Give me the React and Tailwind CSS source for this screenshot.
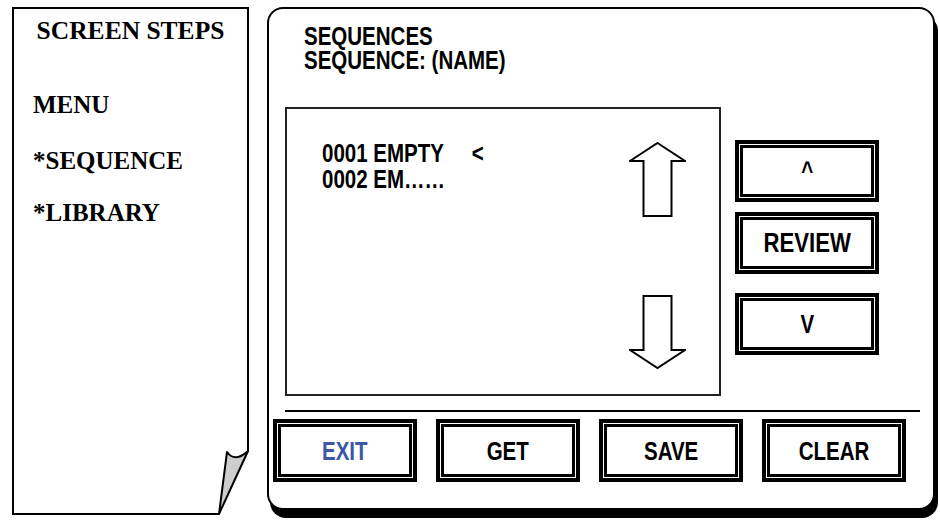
import React from "react";

const SANS = { fontFamily: '"Liberation Sans", Arial, sans-serif' };
const SERIF = { fontFamily: '"Liberation Serif", "Times New Roman", serif' };

const DoubleButton = ({ label, className = "", textClass = "text-black text-[25px]" }) => (
  <div className={`border-4 border-black bg-white p-px ${className}`}>
    <div className="w-full h-full border-[3px] border-black flex items-center justify-center">
      <span
        className={`inline-block scale-x-[0.82] origin-center font-bold leading-[24px] ${textClass}`}
        style={SANS}
      >
        {label}
      </span>
    </div>
  </div>
);

const UpArrow = () => (
  <svg width="57" height="75" viewBox="0 0 57 75">
    <path
      d="M28.5 1 L56 19 L42.5 19 L42.5 74 L14.5 74 L14.5 19 L1 19 Z"
      fill="#fff"
      stroke="#000"
      strokeWidth="2"
    />
  </svg>
);

const DownArrow = () => (
  <svg width="57" height="75" viewBox="0 0 57 75">
    <path
      d="M14.5 1 L42.5 1 L42.5 55 L56 55 L28.5 73 L1 55 L14.5 55 Z"
      fill="#fff"
      stroke="#000"
      strokeWidth="2"
    />
  </svg>
);

const PageCurl = () => (
  <svg
    className="absolute -right-[2px] -bottom-[2px]"
    width="34"
    height="68"
    viewBox="0 0 34 68"
  >
    <rect x="0" y="0" width="34" height="68" fill="#fff" />
    <line x1="0" y1="67" x2="4" y2="67" stroke="#000" strokeWidth="2" />
    <line x1="33" y1="0" x2="33" y2="4.5" stroke="#000" strokeWidth="2" />
    <path
      d="M4 67 L12 5 Q20 16 33 4 Z"
      fill="#cdcdcd"
      stroke="#000"
      strokeWidth="2"
      strokeLinejoin="round"
    />
  </svg>
);

const App = () => {
  return (
    <div className="w-[940px] h-[521px] bg-white flex items-start pt-[7px] pl-[12px] overflow-hidden">
      {/* left: screen steps sheet */}
      <div className="relative w-[237px] h-[508px] border-2 border-black bg-white" style={SERIF}>
        <p className="pt-[10px] text-center font-bold text-[25.5px] leading-[24px] text-black">
          SCREEN STEPS
        </p>
        <div className="pl-[19px] font-bold text-[25px] leading-[24px] text-black">
          <p className="mt-[50px]">MENU</p>
          <p className="mt-[32px]">*SEQUENCE</p>
          <p className="mt-[28px]">*LIBRARY</p>
        </div>
        <PageCurl />
      </div>

      {/* right: sequences screen */}
      <div className="ml-[18px] w-[668px] h-[503px] border-2 border-black rounded-[16px] bg-white shadow-[3px_8px_0_0_#000] flex flex-col">
        <div
          className="pl-[35px] pt-[15px] font-bold text-[25px] leading-[24px] text-black"
          style={SANS}
        >
          <p className="scale-x-[0.82] origin-left">SEQUENCES</p>
          <p className="scale-x-[0.82] origin-left">SEQUENCE: (NAME)</p>
        </div>

        <div className="flex mt-[35px] ml-[16px]">
          <div className="w-[436px] h-[289px] border-2 border-[#222] flex justify-between">
            <div
              className="pl-[35px] pt-[31px] font-bold text-[25px] leading-[26px] text-black"
              style={SANS}
            >
              <p className="scale-x-[0.82] origin-left whitespace-nowrap">
                0001 EMPTY<span className="ml-[34px]">&lt;</span>
              </p>
              <p className="scale-x-[0.82] origin-left whitespace-nowrap">0002 EM……</p>
            </div>
            <div className="pr-[33px] pt-[33px] pb-[24px] flex flex-col justify-between">
              <UpArrow />
              <DownArrow />
            </div>
          </div>

          <div className="ml-[14px] pt-[33px] flex flex-col">
            <DoubleButton label="^" className="w-[144px] h-[62px]" />
            <DoubleButton
              label="REVIEW"
              className="w-[144px] h-[62px] mt-[10px]"
              textClass="text-black text-[27px]"
            />
            <DoubleButton label="V" className="w-[144px] h-[62px] mt-[19px]" />
          </div>
        </div>

        <div className="mt-[14px] ml-[16px] w-[635px] h-[2px] bg-black" />

        <div className="mt-[7px] ml-[4px] flex gap-[19px]">
          <DoubleButton
            label="EXIT"
            className="w-[144px] h-[63px]"
            textClass="text-[#3b57a7] text-[25px]"
          />
          <DoubleButton label="GET" className="w-[144px] h-[63px]" />
          <DoubleButton label="SAVE" className="w-[144px] h-[63px]" />
          <DoubleButton label="CLEAR" className="w-[144px] h-[63px]" />
        </div>
      </div>
    </div>
  );
};

export default App;
